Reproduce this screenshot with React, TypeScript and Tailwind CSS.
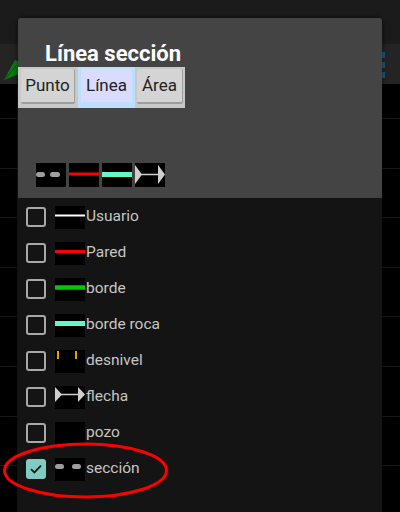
import type { ReactNode } from 'react'

type Row = { label: string; checked?: boolean; swatch: ReactNode }

const Swatch = ({ children, h = 23 }: { children?: ReactNode; h?: number }) => (
    <svg width="30" height={h} viewBox={`0 0 30 ${h}`} className="block shrink-0 bg-black">
        {children}
    </svg>
)

const Arrow = ({ cy, half }: { cy: number; half: number }) => (
    <g fill="#cfcfcf">
        <polygon points={`0,${cy - half} 7,${cy} 0,${cy + half}`} />
        <line x1="6" y1={cy} x2="24" y2={cy} stroke="#cfcfcf" strokeWidth="1.5" />
        <polygon points={`23,${cy - half} 30,${cy} 23,${cy + half}`} />
    </g>
)

const rows: Row[] = [
    { label: 'Usuario', swatch: <line x1="0" y1="9.5" x2="30" y2="9.5" stroke="#ffffff" strokeWidth="2" /> },
    { label: 'Pared', swatch: <line x1="0" y1="9.5" x2="30" y2="9.5" stroke="#ff0000" strokeWidth="3" /> },
    { label: 'borde', swatch: <line x1="0" y1="9.5" x2="30" y2="9.5" stroke="#00c800" strokeWidth="4.5" /> },
    { label: 'borde roca', swatch: <line x1="0" y1="9.5" x2="30" y2="9.5" stroke="#62f7c8" strokeWidth="5" /> },
    {
        label: 'desnivel',
        swatch: (
            <g fill="#d9a400">
                <rect x="2" y="1" width="2" height="8" />
                <rect x="20" y="1" width="2" height="8" />
            </g>
        ),
    },
    { label: 'flecha', swatch: <Arrow cy={8.5} half={7.5} /> },
    { label: 'pozo', swatch: null },
    {
        label: 'sección',
        checked: true,
        swatch: (
            <g stroke="#9e9e9e" strokeWidth="5" strokeLinecap="round">
                <line x1="2.5" y1="8.5" x2="6.5" y2="8.5" />
                <line x1="19.5" y1="8.5" x2="23.5" y2="8.5" />
            </g>
        ),
    },
]

const Checkbox = ({ checked }: { checked?: boolean }) =>
    checked ? (
        <div className="w-[20px] h-[20px] rounded-[3px] bg-[#80cbc4] flex items-center justify-center shrink-0">
            <svg width="14" height="14" viewBox="0 0 14 14">
                <path d="M2 7.2 L5.4 10.4 L12 3.6" fill="none" stroke="#1b1b1b" strokeWidth="1.8" />
            </svg>
        </div>
    ) : (
        <div className="w-[20px] h-[20px] rounded-[3px] border-2 border-[#a8a8a8] shrink-0" />
    )

export default function App() {
    return (
        <div
            className="relative w-[400px] h-[512px] overflow-hidden bg-black"
            style={{ fontFamily: 'Roboto, "Noto Sans", sans-serif' }}
        >
            {/* app behind the dialog */}
            <div className="h-[44px] bg-[#1b1b1b]" />
            <div className="h-[40px] bg-[#242424] flex items-center justify-between">
                <svg width="20" height="40" viewBox="0 0 20 40" className="block">
                    <polygon points="4,36 15,16 19,18 19,30" fill="#0b7d12" />
                    <line x1="6" y1="34" x2="16" y2="22" stroke="#064d0a" strokeWidth="1" />
                </svg>
                <div className="flex flex-col gap-[4px] pt-[8px] self-start mr-[15px]">
                    <div className="w-[4px] h-[6px] bg-[#1d5a78]" />
                    <div className="w-[4px] h-[6px] bg-[#1d5a78]" />
                    <div className="w-[4px] h-[6px] bg-[#1d5a78]" />
                </div>
            </div>
            <div className="bg-[linear-gradient(to_right,transparent_17px,#181818_17px,#181818_18px,transparent_18px)] h-[428px]">
                <div className="h-[35px] border-b border-[#181818]" />
                {[0, 1, 2, 3, 4, 5, 6, 7].map((i) => (
                    <div key={i} className="h-[49.6px] border-b border-[#181818]" />
                ))}
            </div>

            {/* dialog */}
            <div className="absolute left-[18px] top-[18px] w-[364px] h-[500px] rounded-t-[3px] overflow-hidden flex flex-col shadow-[0_0_6px_rgba(0,0,0,0.6)]">
                <div className="h-[180px] bg-[#444444] flex flex-col shrink-0">
                    <h2 className="mt-[23px] ml-[27px] text-[22px] leading-[26px] font-bold text-white">Línea sección</h2>
                    <div className="flex w-[167px] h-[41px] bg-[#c8c8c8]">
                        <div className="pl-[3px] pr-[3px] py-[2px] flex">
                            <div className="w-[54px] h-[35px] bg-[#d4d4d4] rounded-[2px] border-b-2 border-r border-[#9d9d9d] flex items-center justify-center text-[17px] text-[#222]">
                                Punto
                            </div>
                        </div>
                        <div className="w-[57px] bg-[#bcdffb] pl-[3px] pr-[3px] pt-[2px] pb-[6px] flex">
                            <div className="flex-1 bg-[#dadcff] flex items-center justify-center text-[17px] text-[#222]">
                                Línea
                            </div>
                        </div>
                        <div className="pl-[2px] pr-[2px] py-[2px] flex">
                            <div className="w-[46px] h-[35px] bg-[#d4d4d4] rounded-[2px] border-b-2 border-r border-[#9d9d9d] flex items-center justify-center text-[17px] text-[#222]">
                                Área
                            </div>
                        </div>
                    </div>
                    <div className="mt-[55px] ml-[18px] flex gap-[3px]">
                        <Swatch h={24}>
                            <g stroke="#9e9e9e" strokeWidth="5" strokeLinecap="round">
                                <line x1="2.5" y1="11.5" x2="6.5" y2="11.5" />
                                <line x1="16.5" y1="11.5" x2="21.5" y2="11.5" />
                            </g>
                        </Swatch>
                        <Swatch h={24}>
                            <line x1="0" y1="11" x2="30" y2="11" stroke="#ff0000" strokeWidth="3" />
                        </Swatch>
                        <Swatch h={24}>
                            <line x1="0" y1="11.5" x2="30" y2="11.5" stroke="#62f7c8" strokeWidth="5" />
                        </Swatch>
                        <Swatch h={24}>
                            <Arrow cy={11.5} half={9.5} />
                        </Swatch>
                    </div>
                </div>
                <div className="flex-1 bg-[#141414] pl-[8px] pt-[1px]">
                    {rows.map((r) => (
                        <div key={r.label} className="h-[36px] flex items-center">
                            <Checkbox checked={r.checked} />
                            <div className="ml-[9px] mt-[1px]">
                                <Swatch>{r.swatch}</Swatch>
                            </div>
                            <span className="ml-[1px] text-[15.5px] text-[#c6c6c6]">{r.label}</span>
                        </div>
                    ))}
                </div>
            </div>

            {/* annotation */}
            <svg className="absolute left-0 top-0 pointer-events-none" width="400" height="512" viewBox="0 0 400 512">
                <ellipse cx="85.5" cy="470.5" rx="81" ry="26.5" fill="none" stroke="#ff0000" strokeWidth="3" />
            </svg>
        </div>
    )
}
